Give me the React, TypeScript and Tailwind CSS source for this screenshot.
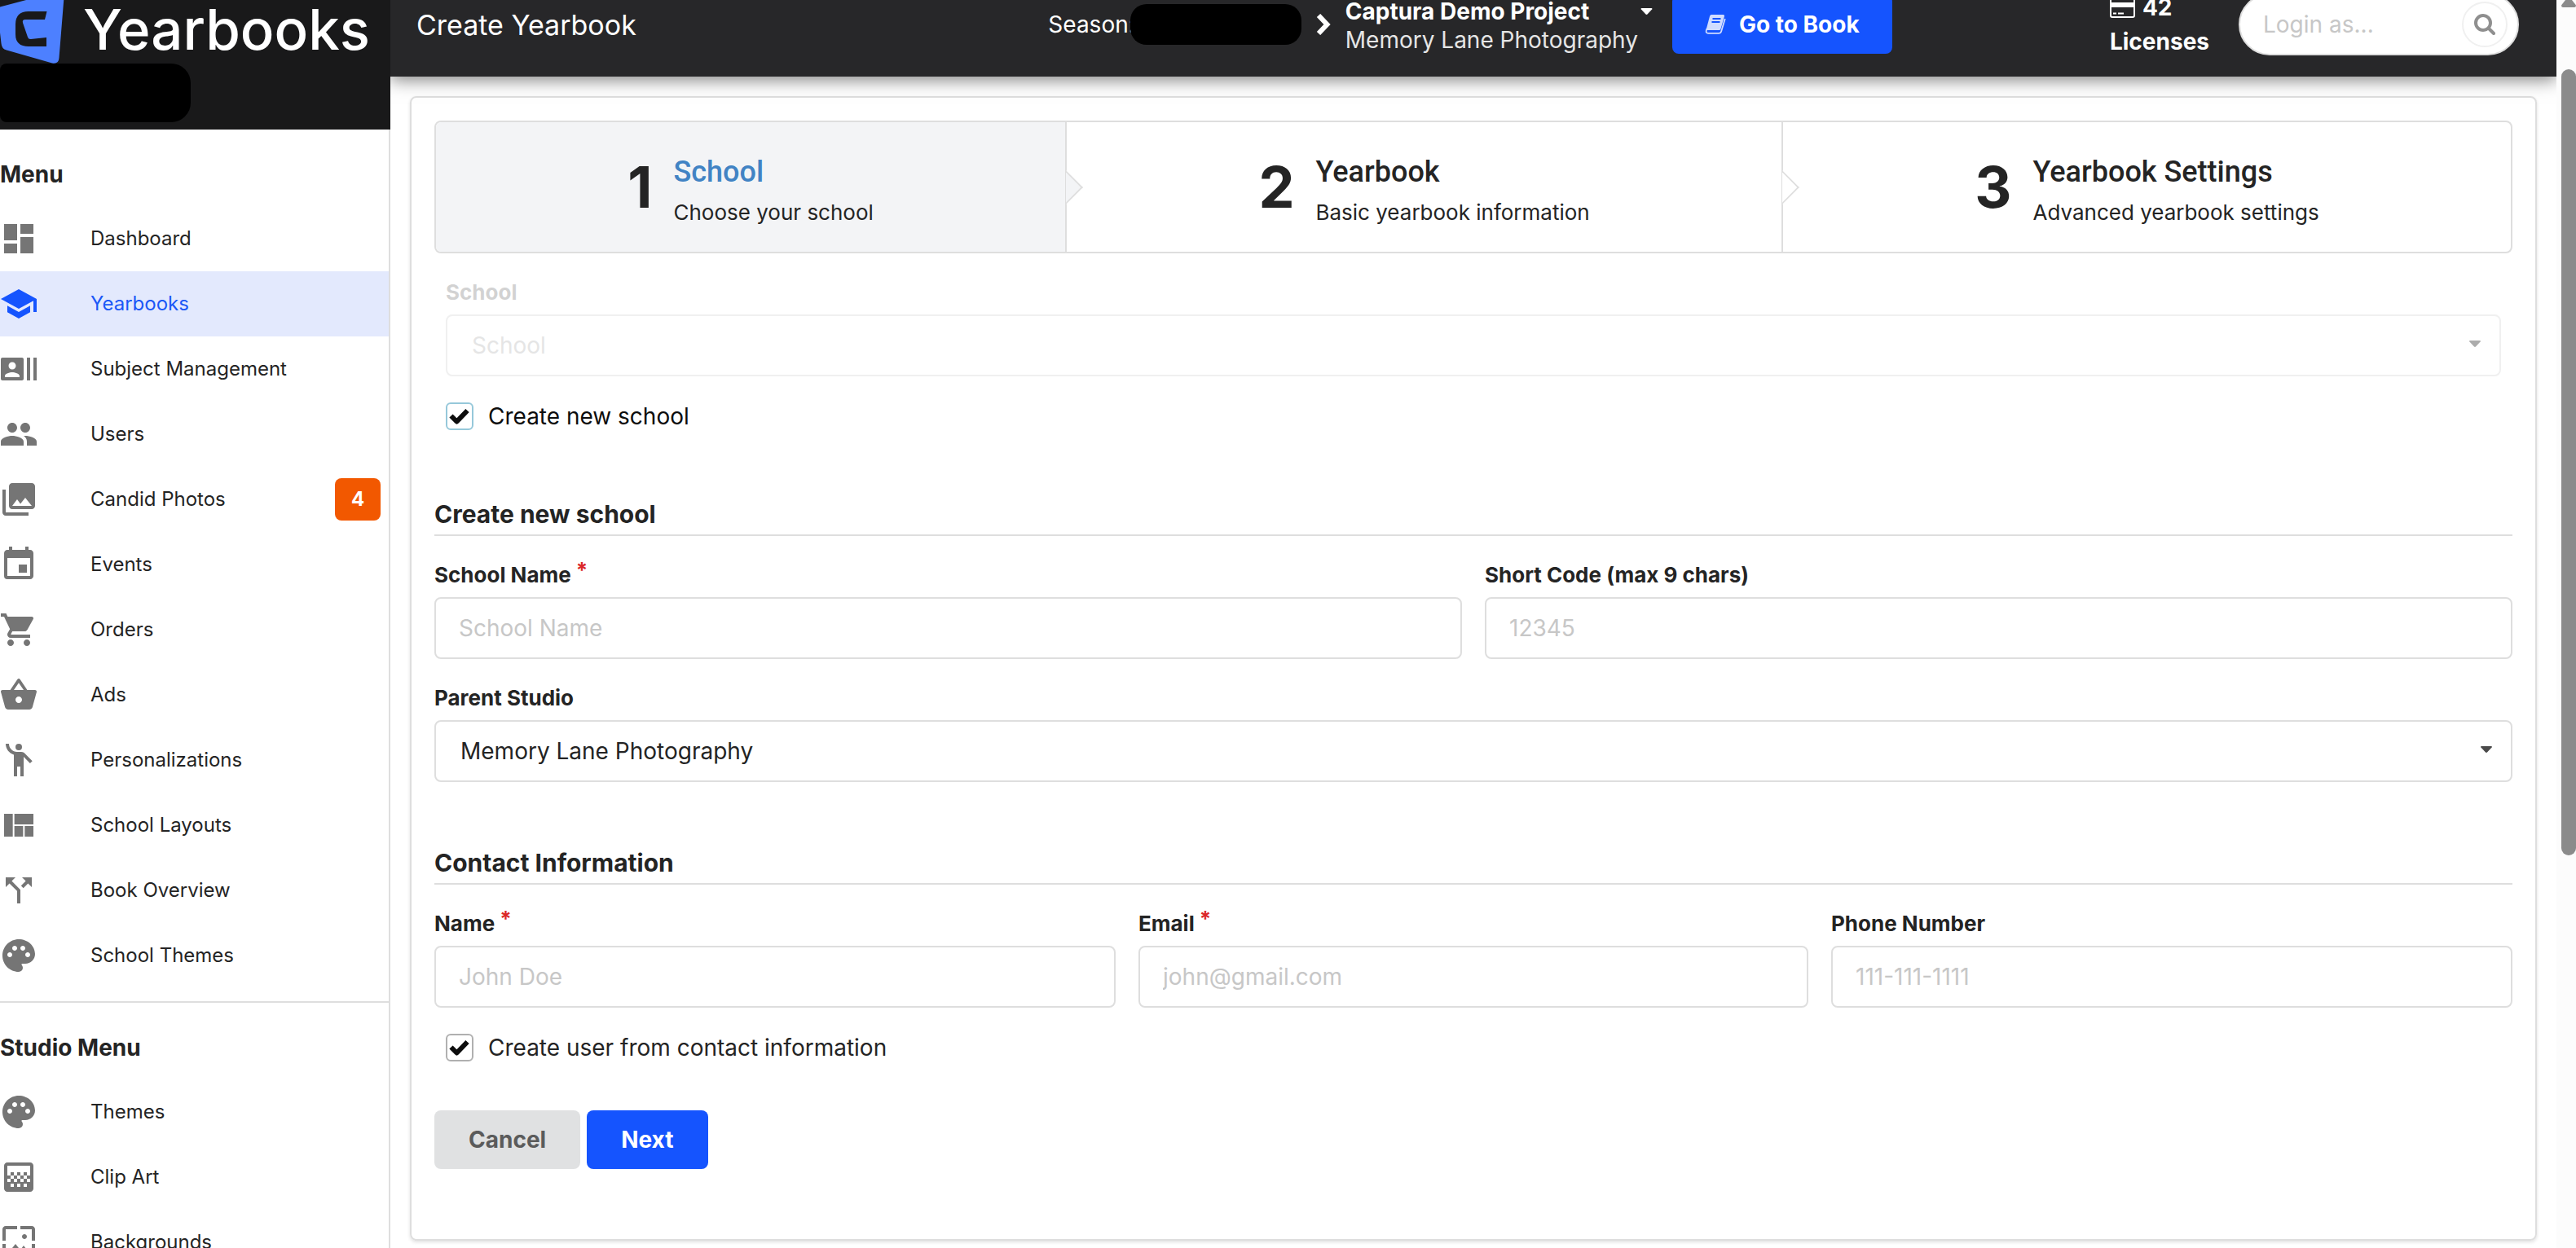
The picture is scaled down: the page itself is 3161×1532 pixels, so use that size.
import { useState } from "react";
import type { IconType } from "react-icons";
import {
  MdCallSplit,
  MdDashboard,
  MdEmojiPeople,
  MdEvent,
  MdGradient,
  MdPalette,
  MdPeople,
  MdPhotoLibrary,
  MdRecentActors,
  MdSchool,
  MdShoppingBasket,
  MdShoppingCart,
  MdViewQuilt,
  MdWallpaper,
} from "react-icons/md";

interface MenuItem {
  label: string;
  icon: IconType;
  active?: boolean;
  badge?: number;
}

const menu: MenuItem[] = [
  { label: "Dashboard", icon: MdDashboard },
  { label: "Yearbooks", icon: MdSchool, active: true },
  { label: "Subject Management", icon: MdRecentActors },
  { label: "Users", icon: MdPeople },
  { label: "Candid Photos", icon: MdPhotoLibrary, badge: 4 },
  { label: "Events", icon: MdEvent },
  { label: "Orders", icon: MdShoppingCart },
  { label: "Ads", icon: MdShoppingBasket },
  { label: "Personalizations", icon: MdEmojiPeople },
  { label: "School Layouts", icon: MdViewQuilt },
  { label: "Book Overview", icon: MdCallSplit },
  { label: "School Themes", icon: MdPalette },
];

const studioMenu: MenuItem[] = [
  { label: "Themes", icon: MdPalette },
  { label: "Clip Art", icon: MdGradient },
  { label: "Backgrounds", icon: MdWallpaper },
];

const steps = [
  { title: "School", description: "Choose your school", active: true },
  { title: "Yearbook", description: "Basic yearbook information" },
  { title: "Yearbook Settings", description: "Advanced yearbook settings" },
];

const Caret = ({ className }: { className: string }) => (
  <svg viewBox="0 0 14 8" className={className} fill="currentColor" aria-hidden="true">
    <path d="M1 0h12c.9 0 1.3 1 .6 1.600L8 7.500c-.6.600-1.400.600-2 0L.4 1.600C-.3 1 .1 0 1 0z" />
  </svg>
);

const MenuSection = ({ title, items }: { title: string; items: MenuItem[] }) => (
  <section className="pt-4 pb-4 border-b-2 border-[#dedede]">
    <h2 className="h-[78px] flex items-center text-[28px] font-bold">{title}</h2>
    <ul>
      {items.map(({ label, icon: Icon, active, badge }) => (
        <li key={label}>
          <a
            href="#"
            className={`h-20 flex items-center pr-[10px] text-2xl ${
              active ? "bg-[#e3e9fd] text-[#1b58f7]" : ""
            }`}
          >
            <Icon className={`size-12 -ml-px mr-16 shrink-0 ${active ? "text-[#1554fe]" : "text-[#757575]"}`} />
            <span className="grow">{label}</span>
            {badge && (
              <span className="w-14 h-[52px] rounded-lg bg-[#f25800] text-white text-2xl font-bold flex items-center justify-center">
                {badge}
              </span>
            )}
          </a>
        </li>
      ))}
    </ul>
  </section>
);

const Sidebar = () => (
  <aside className="w-[479px] shrink-0 border-r-2 border-[#dedede] bg-white">
    <div className="h-[193px] -mr-[2px] bg-[#19191a] overflow-hidden">
      <div className="h-28 flex items-end pb-[6px]">
        <svg viewBox="0 -20 80 98" className="w-20 h-[98px] -mb-[8px] shrink-0" aria-hidden="true">
          <path
            d="M-2 7 L70 -12 Q79 -14 78.500 -5 L72.500 69 Q72 77 64 75.500 L8 59.500 Q2 58 1.500 51 L-3 12 Z"
            fill="#4d80ff"
          />
          <path
            d="M57.500 12 H35 Q19 12 19 28 V40 Q19 55 35 55 H57 V44 L38 46 Q35 46.500 34 43.500 L28 26 Q27 22 31 22 H55 Z"
            fill="#19191a"
          />
        </svg>
        <span className="ml-[22px] text-[69px] leading-[72px] font-medium text-white">Yearbooks</span>
      </div>
      <div className="w-[234px] h-[72px] bg-black rounded-r-[24px] rounded-l-lg" />
    </div>
    <nav>
      <MenuSection title="Menu" items={menu} />
      <MenuSection title="Studio Menu" items={studioMenu} />
    </nav>
  </aside>
);

const Header = () => (
  <header className="relative h-32 grid grid-cols-[1fr_auto_1fr] items-center pl-8 pr-10 bg-[#272729] text-white text-[28px] shadow-[0_4px_20px_rgba(0,0,0,0.5)]">
    <h1 className="text-[34px]">Create Yearbook</h1>

    <div className="flex items-center">
      <span>Season:</span>
      <span className="relative w-[210px] h-[50px] -ml-[6px] rounded-[20px] bg-black" />
      <svg viewBox="0 0 18 26" className="w-[18px] h-[26px] mx-[18px]" fill="none" stroke="currentColor" strokeWidth="6" aria-hidden="true">
        <path d="M3 2 L13.500 13 L3 24" />
      </svg>
      <div className="mt-[3px] leading-[35px]">
        <button type="button" className="w-full flex items-center justify-between font-bold">
          Captura Demo Project
          <Caret className="w-[15px] h-2 -mr-[18px]" />
        </button>
        <div className="text-[#e5e5e5]">Memory Lane Photography</div>
      </div>
      <button
        type="button"
        className="ml-[42px] h-[72px] px-[40px] rounded-lg bg-[#1554fe] font-bold flex items-center gap-4"
      >
        <svg viewBox="0 0 26 24" className="w-[26px] h-6" aria-hidden="true">
          <path d="M8 0h14.500q2 0 1.500 2l-4.500 15.500q-.5 1.500-2 1.500H3.500q-2 0-1.500-2L6 2q.5-2 2-2z" fill="#d0dcff" />
          <path d="M9.500 5h10M8.500 9h10" stroke="#1554fe" strokeWidth="1.800" />
          <path d="M2.500 17q-2.500 5.500 1.500 5.800h13.500q2 0 2.500-1.800l4.800-16" fill="none" stroke="#d0dcff" strokeWidth="1.800" />
        </svg>
        Go to Book
      </button>
    </div>

    <div className="flex items-center justify-end gap-9 pr-[6px]">
      <div className="font-bold leading-[42px]">
        <div className="flex items-center gap-[9px]">
          <svg viewBox="0 0 31 26" className="w-[31px] h-[26px]" aria-hidden="true">
            <rect x="1" y="1" width="29" height="24" rx="2" fill="none" stroke="currentColor" strokeWidth="2" />
            <path d="M1 7h29v6H1z" fill="currentColor" />
            <path d="M4 20.500h4M10 20.500h7" stroke="currentColor" strokeWidth="2" />
          </svg>
          42
        </div>
        <div>Licenses</div>
      </div>
      <div className="w-[344px] h-[76px] flex items-center rounded-full border-2 border-[#dedede] bg-white pl-7 pr-3">
        <input
          type="text"
          aria-label="Login as"
          placeholder="Login as..."
          className="min-w-0 grow text-[#262626] placeholder:text-[#c7c7c7] outline-none"
        />
        <button
          type="button"
          aria-label="Search"
          className="size-14 shrink-0 rounded-full border-2 border-[#f0f0f0] text-[#8f8f8f] flex items-center justify-center"
        >
          <svg viewBox="0 0 26 26" className="size-[26px]" fill="none" stroke="currentColor" strokeWidth="4" strokeLinecap="round" aria-hidden="true">
            <circle cx="11" cy="11" r="9" />
            <path d="M18 18l6 6" />
          </svg>
        </button>
      </div>
    </div>
  </header>
);

const Steps = () => (
  <ol className="h-[163px] flex border-2 border-[#dedede] rounded-lg">
    {steps.map((step, index) => (
      <li
        key={step.title}
        className={`relative grow flex items-center justify-center gap-[26px] px-10 ${
          step.active ? "bg-[#f3f4f6] rounded-l-md" : ""
        } ${index < steps.length - 1 ? "border-r-2 border-[#dedede]" : ""}`}
      >
        <span className="text-[70px] leading-[70px] font-bold">{index + 1}</span>
        <div className="pt-[10px]">
          <div
            className={`font-['Roboto',sans-serif] text-[36px] leading-[46px] font-medium ${
              step.active ? "text-[#4183c4]" : ""
            }`}
          >
            {step.title}
          </div>
          <div className="mt-[6px] text-[26px] leading-[42px]">{step.description}</div>
        </div>
        {index < steps.length - 1 && (
          <span
            className={`absolute z-10 top-1/2 right-0 size-[30px] translate-x-[16px] -translate-y-1/2 rotate-45 border-t-2 border-r-2 border-[#dedede] ${
              step.active ? "bg-[#f3f4f6]" : "bg-white"
            } [clip-path:polygon(0_0,100%_0,100%_100%)]`}
          />
        )}
      </li>
    ))}
  </ol>
);

interface FieldProps {
  id: string;
  label: string;
  placeholder?: string;
  required?: boolean;
  className?: string;
}

const Label = ({ id, label, required }: FieldProps) => (
  <label htmlFor={id} className="block mb-2 text-[26px] leading-[39px] font-bold">
    {label}
    {required && <span className="ml-[6px] leading-7 align-top text-[#db2828]">*</span>}
  </label>
);

const TextField = (props: FieldProps) => (
  <div className={props.className}>
    <Label {...props} />
    <input
      id={props.id}
      type="text"
      placeholder={props.placeholder}
      className="w-full h-[76px] px-7 border-2 border-[#dedede] rounded-lg text-[28px] placeholder:text-[#c7c7c7]"
    />
  </div>
);

const SelectField = (props: FieldProps & { option: string; disabled?: boolean }) => (
  <div className={props.className}>
    <div className={props.disabled ? "opacity-20" : ""}>
      <Label {...props} />
    </div>
    <div className={`relative ${props.disabled ? "opacity-45" : ""}`}>
      <select
        id={props.id}
        disabled={props.disabled}
        className={`w-full h-[76px] px-[30px] border-2 border-[#dedede] rounded-lg text-[28px] bg-white appearance-none opacity-100 ${
          props.disabled ? "text-[#c7c7c7]" : ""
        }`}
      >
        <option>{props.option}</option>
      </select>
      <Caret className="absolute right-[25px] top-8 w-[14px] h-2 text-[#4a4a4a]" />
    </div>
  </div>
);

const Checkbox = ({ id, label, focused }: { id: string; label: string; focused?: boolean }) => {
  const [checked, setChecked] = useState(true);

  return (
    <div className={`mt-8 mx-[14px] h-[34px] flex items-center ${focused ? "text-[#0d0d0d]" : ""}`}>
      <span className="relative size-[34px]">
        <input
          id={id}
          type="checkbox"
          checked={checked}
          onChange={() => setChecked(!checked)}
          className={`block size-[34px] appearance-none border-2 rounded-md bg-white ${
            focused ? "border-[#96c8da]" : "border-[#b0b0b0]"
          }`}
        />
        {checked && (
          <svg viewBox="0 0 34 34" className="absolute inset-0 size-[34px] pointer-events-none" fill="none" stroke="#0d0d0d" strokeWidth="6" aria-hidden="true">
            <path d="M6.500 16.500 L13.500 23.500 L26.500 10" strokeLinejoin="round" />
          </svg>
        )}
      </span>
      <label htmlFor={id} className="ml-[18px] text-[28px]">
        {label}
      </label>
    </div>
  );
};

const SectionTitle = ({ children }: { children: string }) => (
  <h2 className="mt-20 mb-7 pb-[6px] border-b-2 border-[#dedede] text-[30px] leading-[38px] font-bold">{children}</h2>
);

const App = () => {
  return (
    <div className="h-screen overflow-hidden flex bg-white font-['Inter',sans-serif] text-[#242424]">
      {/* The page is scrolled down a little under the window's top edge */}
      <div className="grow min-w-0 flex -mt-[34px]">
        <Sidebar />
        <div className="relative grow min-w-0 overflow-hidden">
          <Header />
          <main className="m-6 px-7 pt-7 pb-[86px] border-2 border-[#dedede] rounded-lg shadow-[0_2px_4px_rgba(0,0,0,0.12)]">
            <Steps />

            <form className="mt-7" onSubmit={(e) => e.preventDefault()}>
              <div className="pb-1">
                <SelectField id="school" label="School" option="School" disabled className="mx-[14px]" />
                <Checkbox id="new-school" label="Create new school" focused />
              </div>

              <SectionTitle>Create new school</SectionTitle>
              <div className="grid grid-cols-2 gap-7">
                <TextField id="school-name" label="School Name" placeholder="School Name" required />
                <TextField id="short-code" label="Short Code (max 9 chars)" placeholder="12345" />
                <SelectField id="studio" label="Parent Studio" option="Memory Lane Photography" className="col-span-2" />
              </div>

              <SectionTitle>Contact Information</SectionTitle>
              <div className="grid grid-cols-3">
                <TextField id="name" label="Name" placeholder="John Doe" required className="pr-[14px]" />
                <TextField id="email" label="Email" placeholder="john@gmail.com" required className="px-[14px]" />
                <TextField id="phone" label="Phone Number" placeholder="111-111-1111" className="pl-[14px]" />
              </div>
              <Checkbox id="new-user" label="Create user from contact information" />

              <div className="mt-[60px] flex gap-2 text-[28px] font-bold">
                <button type="button" className="h-[72px] px-[42px] rounded-lg bg-[#e0e1e2] text-[#5b5b5b]">
                  Cancel
                </button>
                <button type="submit" className="h-[72px] px-[42px] rounded-lg bg-[#1554fe] text-white">
                  Next
                </button>
              </div>
            </form>
          </main>
        </div>
      </div>

      {/* Scrollbar */}
      <div className="w-6 shrink-0 pl-[6px] bg-[#fcfcfc] overflow-hidden" aria-hidden="true">
        <svg viewBox="0 0 18 9" className="w-[18px] h-[9px]" fill="#8b8b8b">
          <path d="M5 0h8l5 6.500q0 2.500-2 2.500H2Q0 9 0 6.500z" />
        </svg>
        <div className="mt-[76px] h-[63%] rounded-full bg-[#8b8b8b]" />
      </div>
    </div>
  );
};

export default App;
